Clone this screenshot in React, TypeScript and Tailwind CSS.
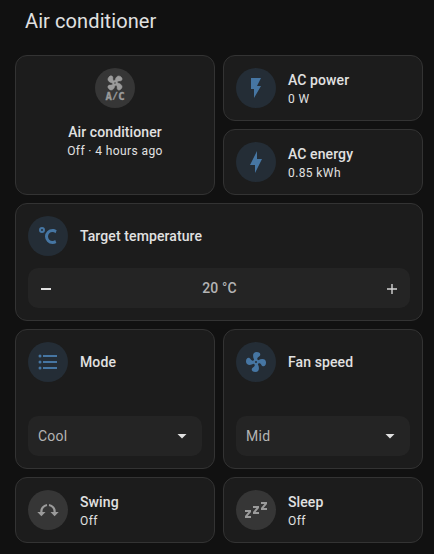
import type { ReactNode } from 'react';

const PATHS = {
  flash: 'M7,2V13H10V22L17,10H13L17,2H7Z',
  bolt: 'M11 15H6L13 1V9H18L11 23V15Z',
  celsius:
    'M16.5,5C18.05,5 19.5,5.47 20.69,6.28L19.53,9.17C18.73,8.44 17.67,8 16.5,8C14,8 12,10 12,12.5C12,15 14,17 16.5,17C17.53,17 18.47,16.66 19.23,16.08L20.37,18.93C19.24,19.61 17.92,20 16.5,20A7.5,7.5 0 0,1 9,12.5A7.5,7.5 0 0,1 16.5,5M6,3A3,3 0 0,1 9,6A3,3 0 0,1 6,9A3,3 0 0,1 3,6A3,3 0 0,1 6,3M6,5A1,1 0 0,0 5,6A1,1 0 0,0 6,7A1,1 0 0,0 7,6A1,1 0 0,0 6,5Z',
  list: 'M7,5H21V7H7V5M7,13V11H21V13H7M4,4.5A1.5,1.5 0 0,1 5.5,6A1.5,1.5 0 0,1 4,7.5A1.5,1.5 0 0,1 2.5,6A1.5,1.5 0 0,1 4,4.5M4,10.5A1.5,1.5 0 0,1 5.5,12A1.5,1.5 0 0,1 4,13.5A1.5,1.5 0 0,1 2.5,12A1.5,1.5 0 0,1 4,10.5M7,19V17H21V19H7M4,16.5A1.5,1.5 0 0,1 5.5,18A1.5,1.5 0 0,1 4,19.5A1.5,1.5 0 0,1 2.5,18A1.5,1.5 0 0,1 4,16.5Z',
  fan: 'M12,11A1,1 0 0,0 11,12A1,1 0 0,0 12,13A1,1 0 0,0 13,12A1,1 0 0,0 12,11M12.5,2C17,2 17.11,5.57 14.75,6.75C13.76,7.24 13.32,8.29 13.13,9.22C13.61,9.42 14.03,9.73 14.35,10.13C18.05,8.13 22.03,8.92 22.03,12.5C22.03,17 18.46,17.1 17.28,14.73C16.78,13.74 15.72,13.3 14.79,13.11C14.59,13.59 14.28,14 13.88,14.34C15.87,18.03 15.08,22 11.5,22C7,22 6.91,18.42 9.27,17.24C10.25,16.75 10.69,15.71 10.89,14.79C10.4,14.59 9.97,14.27 9.65,13.87C5.96,15.85 2,15.07 2,11.5C2,7 5.56,6.89 6.74,9.26C7.24,10.25 8.29,10.68 9.22,10.87C9.41,10.39 9.73,9.97 10.14,9.65C8.15,5.96 8.94,2 12.5,2Z',
  sleep:
    'M23,12H17V10L20.39,6H17V4H23V6L19.62,10H23V12M15,16H9V14L12.39,10H9V8H15V10L11.62,14H15V16M7,20H1V18L4.39,14H1V12H7V14L3.62,18H7V20Z',
};

function Icon({ d }: { d: string }) {
  return (
    <svg viewBox="0 0 24 24" className="size-6 fill-current">
      <path d={d} />
    </svg>
  );
}

function AirConditionerIcon() {
  return (
    <svg viewBox="0 0 24 24" className="size-6 overflow-visible fill-current">
      <g transform="translate(12 7) rotate(38) scale(0.85) translate(-12 -12)">
        <path d={PATHS.fan} stroke="currentColor" strokeWidth="0.5" />
      </g>
      <text
        y="23.8"
        className="font-['DejaVu_Sans_Mono',monospace]"
        fontSize="10.6"
        fontWeight="700"
        stroke="currentColor"
        strokeWidth="0.35"
      >
        <tspan x="2.6">A</tspan>
        <tspan x="9.2" dy="-0.9" fontSize="9.4">
          /
        </tspan>
        <tspan x="15.3" dy="0.9">
          C
        </tspan>
      </text>
    </svg>
  );
}

function SwingIcon() {
  return (
    <svg viewBox="0 0 24 24" className="size-6 fill-current">
      <path d="M11 7A6.5 6.5 0 0 0 5.4 14M13 7A6.5 6.5 0 0 1 18.6 14" fill="none" stroke="currentColor" strokeWidth="2.2" />
      <path d="M1.3 14H9.5L5.4 18.2ZM14.5 14H22.7L18.6 18.2Z" />
    </svg>
  );
}

function Badge({ active, children }: { active?: boolean; children: ReactNode }) {
  return (
    <div
      className={`flex size-10 shrink-0 items-center justify-center rounded-full ${
        active ? 'bg-[#242d36] text-[#4676a3]' : 'bg-[#363636] text-[#9b9b9b]'
      }`}
    >
      {children}
    </div>
  );
}

function Label({ name, state }: { name: string; state?: string }) {
  return (
    <div className="flex flex-col">
      <span className="text-sm leading-5 font-medium tracking-[0.1px]">{name}</span>
      {state && <span className="-mb-px pt-px text-xs leading-4 tracking-[0.4px]">{state}</span>}
    </div>
  );
}

function Card({ className = '', children }: { className?: string; children: ReactNode }) {
  return <section className={`rounded-xl border border-[#333] bg-[#1c1c1c] p-3 ${className}`}>{children}</section>;
}

function Tile({ name, state, active, icon }: { name: string; state?: string; active?: boolean; icon: ReactNode }) {
  return (
    <div className="flex h-10 items-center gap-3">
      <Badge active={active}>{icon}</Badge>
      <Label name={name} state={state} />
    </div>
  );
}

function Select({ value }: { value: string }) {
  return (
    <button className="flex h-10 w-full items-center justify-between rounded-[10px] bg-[#242424] pr-2 pl-2.5 text-sm tracking-[0.25px] text-[#b4b4b4]">
      {value}
      <svg viewBox="0 0 24 24" className="size-6 fill-[#e1e1e1]">
        <path d="M7.5 10L12 14.5L16.5 10Z" />
      </svg>
    </button>
  );
}

export default function App() {
  return (
    <main className="h-[554px] w-[434px] bg-[#111] pr-[11px] pl-[15px] font-[Roboto,sans-serif] text-[#e1e1e1]">
      <h1 className="h-[55px] pt-[7px] pl-2.5 text-xl leading-7 font-normal tracking-[0.1px]">Air conditioner</h1>
      <div className="grid grid-cols-2 gap-2">
        <Card className="row-span-2 flex flex-col items-center gap-3.5 text-center">
          <Badge>
            <AirConditionerIcon />
          </Badge>
          <Label name="Air conditioner" state="Off · 4 hours ago" />
        </Card>
        <Card>
          <Tile name="AC power" state="0 W" active icon={<Icon d={PATHS.flash} />} />
        </Card>
        <Card>
          <Tile name="AC energy" state="0.85 kWh" active icon={<Icon d={PATHS.bolt} />} />
        </Card>
        <Card className="col-span-2 flex flex-col gap-3">
          <Tile name="Target temperature" active icon={<Icon d={PATHS.celsius} />} />
          <div className="flex h-10 items-center justify-between rounded-[10px] bg-[#242424] px-2.5">
            <button aria-label="Decrease" className="flex size-4 items-center justify-center">
              <svg viewBox="0 0 16 16" className="size-4 fill-[#e1e1e1]">
                <path d="M3 8H13V10H3Z" />
              </svg>
            </button>
            <span className="pl-px text-sm font-medium tracking-[0.1px] text-[#b4b4b4]">20 °C</span>
            <button aria-label="Increase" className="flex size-4 items-center justify-center">
              <svg viewBox="0 0 16 16" className="size-4 fill-[#d4d4d4]">
                <path d="M3 8.3H7.3V4H8.7V8.3H13V9.7H8.7V14H7.3V9.7H3Z" />
              </svg>
            </button>
          </div>
        </Card>
        <Card className="flex h-[140px] flex-col justify-between">
          <Tile name="Mode" active icon={<Icon d={PATHS.list} />} />
          <Select value="Cool" />
        </Card>
        <Card className="flex h-[140px] flex-col justify-between">
          <Tile name="Fan speed" active icon={<Icon d={PATHS.fan} />} />
          <Select value="Mid" />
        </Card>
        <Card>
          <Tile name="Swing" state="Off" icon={<SwingIcon />} />
        </Card>
        <Card>
          <Tile name="Sleep" state="Off" icon={<Icon d={PATHS.sleep} />} />
        </Card>
      </div>
    </main>
  );
}
